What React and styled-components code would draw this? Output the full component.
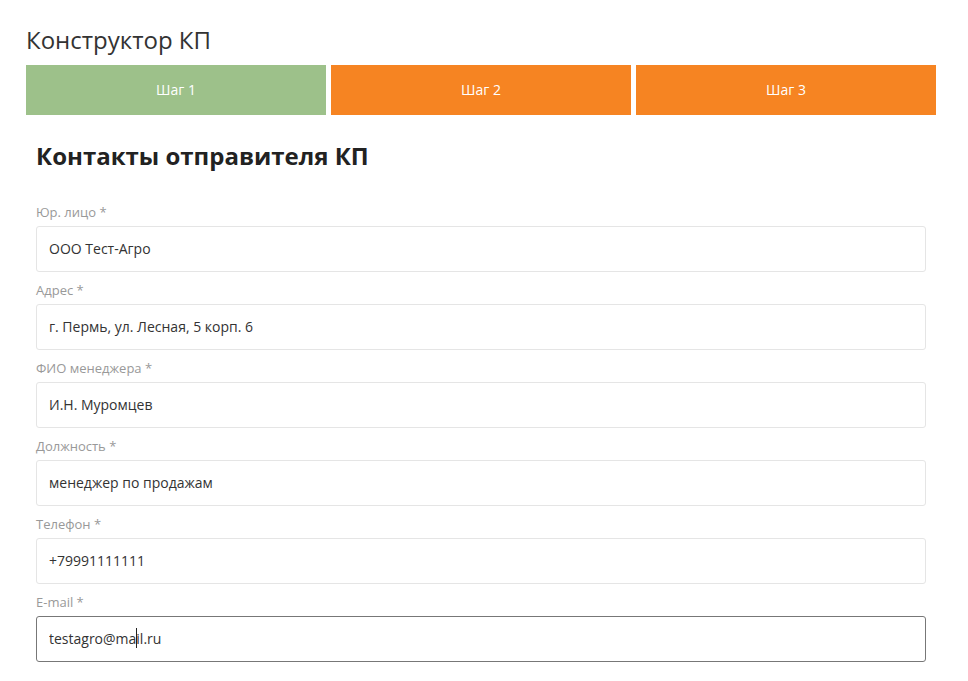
import React from "react";
import styled, { createGlobalStyle } from "styled-components";

const GlobalStyle = createGlobalStyle`
  body {
    margin: 0;
    background: #fff;
    font-family: "Open Sans", "Noto Sans", sans-serif;
    color: #333;
  }
`;

const fields = [
  { label: "Юр. лицо *", value: "ООО Тест-Агро" },
  { label: "Адрес *", value: "г. Пермь, ул. Лесная, 5 корп. 6" },
  { label: "ФИО менеджера *", value: "И.Н. Муромцев" },
  { label: "Должность *", value: "менеджер по продажам" },
  { label: "Телефон *", value: "+79991111111" },
  { label: "E-mail *", value: "testagro@mail.ru", focused: true },
];

export default function App() {
  return (
    <Page>
      <GlobalStyle />
      <Title>Конструктор КП</Title>
      <Steps>
        <Step active>Шаг 1</Step>
        <Step>Шаг 2</Step>
        <Step>Шаг 3</Step>
      </Steps>
      <Form>
        <Heading>Контакты отправителя КП</Heading>
        {fields.map((f) => (
          <Group key={f.label}>
            <Label>{f.label}</Label>
            <InputWrap>
              <Input defaultValue={f.value} focused={f.focused ? 1 : 0} />
              {f.focused && <Caret />}
            </InputWrap>
          </Group>
        ))}
      </Form>
    </Page>
  );
}

const Page = styled.div`
  padding: 26px 32px 0 26px;
`;

const Title = styled.h1`
  margin: 0 0 11px;
  font-size: 24px;
  line-height: 28px;
  font-weight: 400;
  color: #333;
`;

const Steps = styled.div`
  display: grid;
  grid-template-columns: repeat(3, 1fr);
  gap: 5px;
`;

const Step = styled.div`
  height: 50px;
  display: flex;
  align-items: center;
  justify-content: center;
  padding-bottom: 2px;
  box-sizing: border-box;
  font-size: 14px;
  color: #fff;
  background: ${({ active }) => (active ? "#9dc18a" : "#f68422")};
`;

const Form = styled.div`
  padding: 0 10px;
`;

const Heading = styled.h2`
  margin: 26px 0 31px;
  font-size: 24px;
  line-height: 30px;
  font-weight: 700;
  color: #222;
`;

const Group = styled.div`
  display: flex;
  flex-direction: column;
  gap: 4px;
  margin-bottom: 8px;
`;

const Label = styled.label`
  font-size: 13px;
  line-height: 20px;
  color: #999;
`;

const InputWrap = styled.div`
  position: relative;
`;

const Input = styled.input`
  display: block;
  box-sizing: border-box;
  height: 46px;
  width: 100%;
  padding: 0 12px 2px;
  border: 1px solid ${({ focused }) => (focused ? "#777" : "#e5e5e5")};
  border-radius: 3px;
  font-family: "Open Sans", "Noto Sans", sans-serif;
  font-size: 14px;
  color: #333;
  background: #fff;
  outline: none;
`;

const Caret = styled.span`
  position: absolute;
  left: 100px;
  top: 12px;
  width: 1px;
  height: 20px;
  background: #222;
`;
